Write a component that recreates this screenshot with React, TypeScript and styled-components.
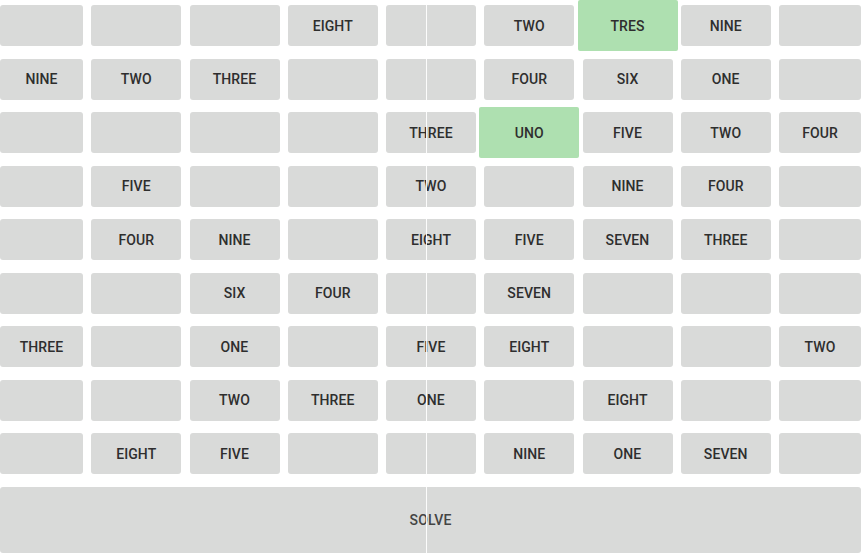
import React from "react";
import styled, { createGlobalStyle } from "styled-components";

const GlobalStyle = createGlobalStyle`
  html, body {
    margin: 0;
    padding: 0;
    background: #ffffff;
    overflow: hidden;
  }
  body {
    font-family: Roboto, "Liberation Sans", Arial, sans-serif;
  }
`;

const Page = styled.div`
  width: 861px;
  height: 556px;
  padding-top: 5px;
  box-sizing: border-box;
  display: flex;
  flex-direction: column;
  gap: 12.5px;
  position: relative;
`;

const Board = styled.div`
  display: grid;
  grid-template-columns: 83px repeat(7, 90px) 82px;
  grid-auto-rows: 41px;
  column-gap: 8.25px;
  row-gap: 12.5px;
`;

const Cell = styled.button<{ $selected?: boolean }>`
  border: none;
  margin: ${(p) => (p.$selected ? "-5px" : "0")};
  padding: 0;
  border-radius: ${(p) => (p.$selected ? "2px" : "3px")};
  background: ${(p) => (p.$selected ? "#aee0b0" : "#d9dad9")};
  color: #2e2e2e;
  font-family: Roboto, "Liberation Sans", Arial, sans-serif;
  font-size: 14px;
  font-weight: 500;
  letter-spacing: 0.1px;
  text-transform: uppercase;
  display: flex;
  align-items: center;
  justify-content: center;
  position: ${(p) => (p.$selected ? "relative" : "static")};
  z-index: ${(p) => (p.$selected ? 1 : 0)};
`;

const SolveButton = styled.button`
  border: none;
  border-radius: 3px;
  height: 66px;
  width: 861px;
  padding-top: 2px;
  background: #d9dad9;
  color: #444444;
  font-family: Roboto, "Liberation Sans", Arial, sans-serif;
  font-size: 14px;
  font-weight: 500;
  letter-spacing: 0.1px;
  text-transform: uppercase;
`;

const Seam = styled.div`
  position: absolute;
  top: 0;
  bottom: 0;
  left: 426px;
  width: 1px;
  background: rgba(255, 255, 255, 0.9);
  pointer-events: none;
  z-index: 2;
`;

const rows: string[][] = [
  ["", "", "", "EIGHT", "", "TWO", "TRES", "NINE", ""],
  ["NINE", "TWO", "THREE", "", "", "FOUR", "SIX", "ONE", ""],
  ["", "", "", "", "THREE", "UNO", "FIVE", "TWO", "FOUR"],
  ["", "FIVE", "", "", "TWO", "", "NINE", "FOUR", ""],
  ["", "FOUR", "NINE", "", "EIGHT", "FIVE", "SEVEN", "THREE", ""],
  ["", "", "SIX", "FOUR", "", "SEVEN", "", "", ""],
  ["THREE", "", "ONE", "", "FIVE", "EIGHT", "", "", "TWO"],
  ["", "", "TWO", "THREE", "ONE", "", "EIGHT", "", ""],
  ["", "EIGHT", "FIVE", "", "", "NINE", "ONE", "SEVEN", ""],
];

const selected = new Set(["0-6", "2-5"]);

export default function App() {
  return (
    <>
      <GlobalStyle />
      <Page>
        <Board>
          {rows.map((row, r) =>
            row.map((word, c) => (
              <Cell key={`${r}-${c}`} $selected={selected.has(`${r}-${c}`)}>
                {word}
              </Cell>
            ))
          )}
        </Board>
        <SolveButton>Solve</SolveButton>
        <Seam />
      </Page>
    </>
  );
}
